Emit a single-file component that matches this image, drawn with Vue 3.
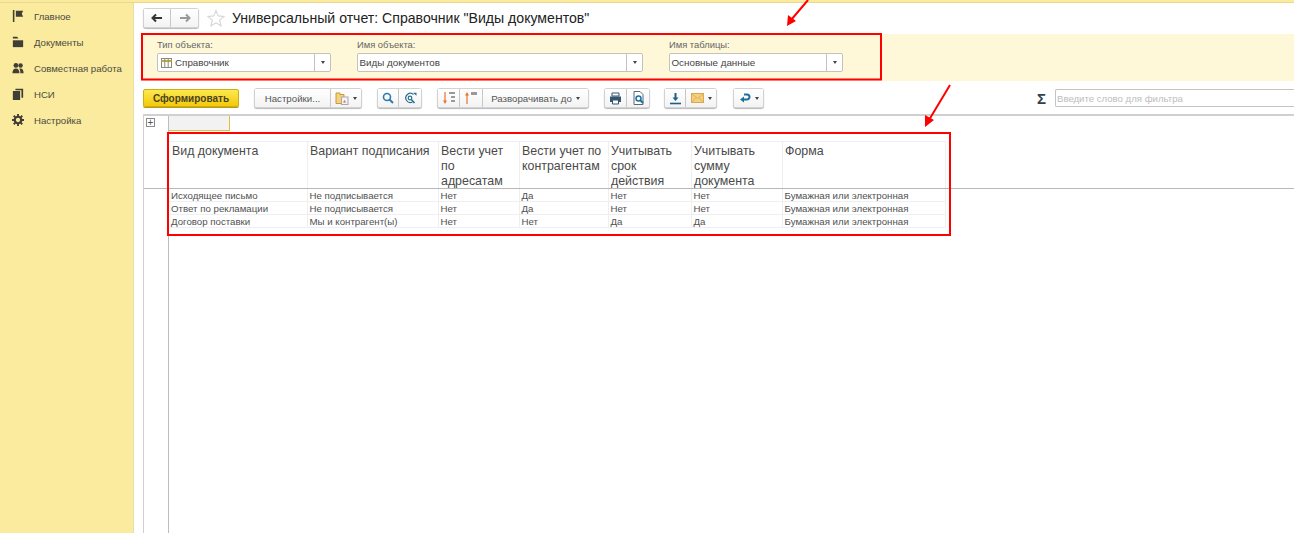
<script setup>
const menu = [
  { name: 'Главное', icon: 'flag' },
  { name: 'Документы', icon: 'folder' },
  { name: 'Совместная работа', icon: 'people' },
  { name: 'НСИ', icon: 'pages' },
  { name: 'Настройка', icon: 'gear' }
]

const params = [
  { label: 'Тип объекта:', value: 'Справочник', width: 174, gap: 26, table: true },
  { label: 'Имя объекта:', value: 'Виды документов', width: 286, gap: 26 },
  { label: 'Имя таблицы:', value: 'Основные данные', width: 174, gap: 0 }
]

const columns = [
  { title: 'Вид документа', width: 139 },
  { title: 'Вариант подписания', width: 131 },
  { title: 'Вести учет по адресатам', width: 81 },
  { title: 'Вести учет по контрагентам', width: 89 },
  { title: 'Учитывать срок действия', width: 83 },
  { title: 'Учитывать сумму документа', width: 91 },
  { title: 'Форма', width: 163 }
]

const rows = [
  ['Исходящее письмо', 'Не подписывается', 'Нет', 'Да', 'Нет', 'Нет', 'Бумажная или электронная'],
  ['Ответ по рекламации', 'Не подписывается', 'Нет', 'Да', 'Нет', 'Нет', 'Бумажная или электронная'],
  ['Договор поставки', 'Мы и контрагент(ы)', 'Нет', 'Нет', 'Да', 'Да', 'Бумажная или электронная']
]
</script>

<template>
  <div class="page">
    <div class="top-strip"></div>
    <div class="layout">
      <aside class="sidebar">
        <div v-for="item in menu" :key="item.name" class="menu-item">
          <svg class="menu-icon" width="12" height="12" viewBox="0 0 14 14">
            <g v-if="item.icon === 'flag'" fill="#3f3f35">
              <rect x="1" y="0" width="1.800" height="14" />
              <path d="M4.500 1h8.500l-1.600 3.500 1.600 3.500H4.500z" />
            </g>
            <g v-else-if="item.icon === 'folder'" fill="#3f3f35">
              <path d="M1 1h5l1.500 2H1z" />
              <path d="M1 5h12v8H1z" />
            </g>
            <g v-else-if="item.icon === 'people'" fill="#3f3f35">
              <circle cx="4.600" cy="4" r="2.800" />
              <circle cx="10" cy="4" r="2.600" />
              <path d="M0.500 13c0-3.500 1.500-5.400 4.100-5.400S8.700 9.500 8.700 13z" />
              <path d="M9.800 13c0-2.200-.4-3.900-1.300-5 .5-.2 1-.3 1.500-.3 2.300 0 3.500 2 3.500 5.300z" />
            </g>
            <g v-else-if="item.icon === 'pages'" fill="#3f3f35">
              <rect x="1" y="3.500" width="8.500" height="10.500" />
              <path d="M4 1h9v10.500h-2V2.500H4z" />
            </g>
            <g v-else>
              <circle cx="7" cy="7" r="3.800" fill="none" stroke="#3f3f35" stroke-width="2.600" />
              <path d="M7 0v3M7 11v3M0 7h3M11 7h3M2 2l2.200 2.200M9.800 9.800 12 12M12 2 9.800 4.200M4.200 9.800 2 12" stroke="#3f3f35" stroke-width="2.200" />
            </g>
          </svg>
          <span>{{ item.name }}</span>
        </div>
      </aside>

      <main class="content">
        <div class="title-row">
          <div class="btn-group nav-group">
            <button class="btn icon-btn nav-btn">
              <svg width="12" height="10" viewBox="0 0 12 10"><path d="M1 5h10M5 1.500 1.500 5 5 8.500" fill="none" stroke="#333" stroke-width="2" /></svg>
            </button>
            <button class="btn icon-btn nav-btn">
              <svg width="12" height="10" viewBox="0 0 12 10"><path d="M1 5h10M7 1.500 10.500 5 7 8.500" fill="none" stroke="#999" stroke-width="2" /></svg>
            </button>
          </div>
          <svg class="star" width="18" height="18" viewBox="0 0 19 18">
            <path d="M9.500 1.200 11.900 6.800 18 7.300 13.400 11.300 14.800 17.200 9.500 14.100 4.200 17.200 5.600 11.300 1 7.300 7.100 6.800z" fill="#fff" stroke="#d5d5d5" stroke-width="1.200" />
          </svg>
          <h1 class="title">Универсальный отчет: Справочник "Виды документов"</h1>
        </div>

        <div class="params">
          <div v-for="p in params" :key="p.label" class="param" :style="{ width: p.width + 'px', marginRight: p.gap + 'px' }">
            <label>{{ p.label }}</label>
            <div class="select">
              <svg v-if="p.table" class="select-icon" width="11" height="10" viewBox="0 0 11 10">
                <rect x="0.500" y="0.500" width="10" height="9" fill="#fff" stroke="#8a8a7a" />
                <path d="M0.500 3h10" stroke="#c9a93a" stroke-width="2" />
                <path d="M3.800 1v8M7.200 1v8" stroke="#8a8a7a" />
              </svg>
              <span class="select-text">{{ p.value }}</span>
              <span class="select-arrow"><i class="caret"></i></span>
            </div>
          </div>
        </div>

        <div class="toolbar">
          <button class="btn primary">Сформировать</button>

          <div class="btn-group settings-group">
            <button class="btn text-btn settings-btn">Настройки...</button>
            <button class="btn icon-btn settings-more">
              <svg width="14" height="14" viewBox="0 0 14 14">
                <path d="M1 2h4v1.500h4v9H1z" fill="#f3d27a" stroke="#c79a3c" />
                <rect x="6.500" y="6" width="6.500" height="7.500" fill="#f4f4f4" stroke="#a9a9a9" />
                <path d="M8 11.500 9.500 9l1.500 2.500z" fill="#d66" />
              </svg>
              <i class="caret"></i>
            </button>
          </div>

          <div class="btn-group search-group">
            <button class="btn icon-btn search-btn">
              <svg width="12" height="12" viewBox="0 0 12 12"><circle cx="5" cy="5" r="3.500" fill="none" stroke="#2b7bb0" stroke-width="1.600" /><path d="M7.500 7.500 11 11" stroke="#2b7bb0" stroke-width="2" /></svg>
            </button>
            <button class="btn icon-btn search-next">
              <svg width="13" height="13" viewBox="0 0 13 13"><path d="M9.500 2.500A4.600 4.600 0 1 0 8.500 10" fill="none" stroke="#2a6f90" stroke-width="1.200" /><circle cx="6" cy="6" r="1.800" fill="none" stroke="#2a6f90" stroke-width="1.200" /><path d="M7.300 7.500 10.500 11" stroke="#2a6f90" stroke-width="1.600" /><path d="M9 .8h3.500v3z" fill="#2a6f90" /></svg>
            </button>
          </div>

          <div class="btn-group expand-group">
            <button class="btn icon-btn w22">
              <svg width="14" height="14" viewBox="0 0 14 14"><path d="M3 1v10" stroke="#e8742a" stroke-width="1.200" /><path d="M1 9.500 3 13l2-3.500z" fill="#e8742a" /><path d="M7 1h6v2H7zM9 5h4v2H9zM9 9h4v2H9z" fill="#9a9a9a" /></svg>
            </button>
            <button class="btn icon-btn w23">
              <svg width="14" height="14" viewBox="0 0 14 14"><path d="M3 3v10" stroke="#e8742a" stroke-width="1.200" /><path d="M1 4.500 3 1l2 3.500z" fill="#e8742a" /><path d="M7 1h6v3H7z" fill="#9a9a9a" /></svg>
            </button>
            <button class="btn text-btn expand-btn">Разворачивать до <i class="caret"></i></button>
          </div>

          <div class="btn-group print-group">
            <button class="btn icon-btn w22">
              <svg width="13" height="13" viewBox="0 0 13 13"><path d="M3 1h7v3H3z" fill="#fff" stroke="#34566e" /><path d="M1 4.500h11V10H1z" fill="#34566e" /><path d="M3.500 8h6v4h-6z" fill="#fff" stroke="#34566e" /></svg>
            </button>
            <button class="btn icon-btn w22">
              <svg width="13" height="14" viewBox="0 0 13 14"><path d="M2 .5h6l3 3v10H2z" fill="#fff" stroke="#5a6a75" /><circle cx="6.500" cy="7.500" r="2.500" fill="none" stroke="#1f6f9c" stroke-width="1.500" /><path d="M8.300 9.300 11 12" stroke="#1f6f9c" stroke-width="2" /></svg>
            </button>
          </div>

          <div class="btn-group export-group">
            <button class="btn icon-btn w21">
              <svg width="13" height="13" viewBox="0 0 13 13"><path d="M6.500 1v6" stroke="#1c5f8a" stroke-width="2" /><path d="M3.500 5.500h6l-3 3.500z" fill="#1c5f8a" /><path d="M1 11.500h11" stroke="#1c5f8a" stroke-width="1.600" /></svg>
            </button>
            <button class="btn icon-btn w30">
              <svg width="13" height="10" viewBox="0 0 13 10"><rect x="0.500" y="0.500" width="12" height="9" fill="#f4cf80" stroke="#d9a94a" /><path d="M1 1l5.500 4.500L12 1M1 9l4-4.500M12 9 8 4.500" fill="none" stroke="#dba94c" stroke-width=".8" /></svg>
              <i class="caret"></i>
            </button>
          </div>

          <div class="btn-group undo-group">
            <button class="btn icon-btn undo-btn">
              <svg width="12" height="10" viewBox="0 0 12 10"><path d="M4 6.500h4A2.500 2.500 0 0 0 8 1.500H5" fill="none" stroke="#1f6f9c" stroke-width="2" /><path d="M5 3.500 1 6.500 5 9.500z" fill="#1f6f9c" /></svg>
              <i class="caret"></i>
            </button>
          </div>

          <div class="filter">
            <span class="sigma">Σ</span>
            <input class="filter-input" placeholder="Введите слово для фильтра" />
          </div>
        </div>

        <div class="sheet">
          <div class="sheet-row top-row">
            <div class="gutter"><span class="plus">+</span></div>
            <div class="active-cell"></div>
          </div>
          <div class="sheet-row spacer-row"><div class="gutter"></div></div>
          <div class="sheet-row head-row">
            <div class="gutter"></div>
            <div v-for="col in columns" :key="col.title" class="head-cell" :style="{ width: col.width + 'px' }">{{ col.title }}</div>
          </div>
          <div v-for="(row, i) in rows" :key="i" class="sheet-row body-row">
            <div class="gutter"></div>
            <div v-for="(val, j) in row" :key="j" class="body-cell" :style="{ width: columns[j].width + 'px' }">{{ val }}</div>
          </div>
          <div class="sheet-row rest-row"><div class="gutter"></div></div>
        </div>
      </main>
    </div>

    <!-- красные пометки поверх скриншота -->
    <svg class="marks" width="1294" height="533" viewBox="0 0 1294 533">
      <g fill="none" stroke="#f00" stroke-width="2">
        <rect x="142" y="34" width="739" height="45.500" />
        <rect x="168" y="133" width="782" height="102" />
        <path d="M808 0 791 20M950 85 929 120" />
      </g>
      <path d="M787 26 788 15 796 21z M925 127 925 115 934 120z" fill="#f00" />
    </svg>
  </div>
</template>

<style>
html, body {
  margin: 0;
  background: #fff;
}
</style>

<style scoped>
.page {
  position: relative;
  width: 1294px;
  height: 533px;
  overflow: hidden;
  font-family: "Liberation Sans", Arial, sans-serif;
  color: #444;
  display: flex;
  flex-direction: column;
}

.top-strip {
  height: 2px;
  background: #fbeb9e;
  border-bottom: 1px solid #e9d98c;
}

.layout {
  flex: 1;
  display: flex;
  min-height: 0;
}

.sidebar {
  width: 133px;
  background: #fbeb9e;
  border-right: 1px solid #e6dca6;
  flex-shrink: 0;
}

.menu-item {
  height: 26px;
  display: flex;
  align-items: center;
  padding-left: 12px;
  font-size: 9.600px;
  color: #4a4a40;
}

.menu-icon {
  margin-right: 10px;
  flex-shrink: 0;
}

.content {
  flex: 1;
  min-width: 0;
  display: flex;
  flex-direction: column;
}

.title-row {
  height: 31px;
  display: flex;
  align-items: center;
  padding-left: 10px;
  padding-bottom: 1px;
  box-sizing: border-box;
}

.star {
  margin-left: 9px;
  margin-right: 7px;
}

.title {
  margin: 0;
  font-size: 14.100px;
  font-weight: 400;
  color: #222;
  white-space: nowrap;
}

.params {
  height: 47px;
  background: #fef8d8;
  margin-left: 7px;
  padding-left: 16px;
  display: flex;
  box-sizing: border-box;
}

.param label {
  display: block;
  font-size: 9.400px;
  line-height: 12px;
  padding-top: 5px;
  height: 14px;
  color: #666;
}

.select {
  height: 19px;
  box-sizing: border-box;
  background: #fff;
  border: 1px solid #c4c4bc;
  border-radius: 2px;
  display: flex;
  align-items: center;
  padding-left: 1.500px;
  font-size: 9.800px;
  color: #444;
}

.select-icon {
  margin: 0 3px 0 1.500px;
}

.select-text {
  flex: 1;
}

.select-arrow {
  width: 15px;
  height: 100%;
  border-left: 1px solid #c4c4bc;
  display: flex;
  align-items: center;
  justify-content: center;
}

.caret {
  display: inline-block;
  width: 0;
  height: 0;
  border-left: 2.500px solid transparent;
  border-right: 2.500px solid transparent;
  border-top: 3px solid #444;
}

.toolbar {
  height: 35px;
  margin-left: 9px;
  display: flex;
  align-items: flex-start;
  padding-top: 8px;
  box-sizing: border-box;
  border-bottom: 2px solid #d0d0d0;
}

.btn {
  height: 18px;
  padding: 0;
  box-sizing: border-box;
  border: 0;
  border-right: 1px solid #c8c8c8;
  background: linear-gradient(#fff, #f3f3f3);
  display: flex;
  align-items: center;
  justify-content: center;
  gap: 4px;
  font-family: inherit;
  font-size: 9.700px;
  color: #555;
}

.btn:last-child {
  border-right: 0;
}

.btn-group {
  display: flex;
  height: 18px;
  border-radius: 2px;
  box-shadow: 0 0 0 1px #d2d2d2, 0 1px 1px 1px #b8b8b8;
  background: #fff;
}

.primary {
  width: 96px;
  height: 18px;
  border: 1px solid #d0ae10;
  border-radius: 2px;
  background: linear-gradient(#fce94f, #f3c90c);
  font-size: 10px;
  font-weight: 700;
  color: #4a4320;
  box-shadow: 0 1px 0 #b89a10;
  flex-shrink: 0;
}

.nav-group {
  flex-shrink: 0;
}

.nav-btn {
  width: 27px;
}

.settings-group {
  margin-left: 16px;
}

.settings-btn {
  width: 76px;
}

.settings-more {
  width: 30px;
}

.search-group,
.expand-group,
.print-group {
  margin-left: 17px;
}

.search-btn {
  width: 21px;
}

.search-next {
  width: 22px;
}

.expand-btn {
  width: 105px;
}

.export-group {
  margin-left: 16px;
}

.undo-group {
  margin-left: 18px;
}

.undo-btn {
  width: 29px;
}

.w21 {
  width: 21px;
}

.w22 {
  width: 22px;
}

.w23 {
  width: 23px;
}

.w30 {
  width: 30px;
}

.filter {
  margin-left: auto;
  display: flex;
  align-items: center;
  height: 18px;
}

.sigma {
  font-size: 15px;
  font-weight: 700;
  color: #34404a;
  margin-right: 9px;
}

.filter-input {
  width: 239px;
  height: 18px;
  box-sizing: border-box;
  border: 1px solid #c4c4c4;
  border-right: 0;
  border-radius: 2px 0 0 2px;
  padding: 0 1px;
  font-family: inherit;
  font-size: 9.600px;
  outline: none;
}

.filter-input::placeholder {
  color: #bdbdbd;
}

.sheet {
  flex: 1;
  margin-left: 9px;
  border-left: 1px solid #d0d0d0;
  display: flex;
  flex-direction: column;
  min-height: 0;
}

.sheet-row {
  display: flex;
}

.gutter {
  width: 24px;
  flex-shrink: 0;
  border-right: 1px solid #bdbdbd;
}

.top-row {
  height: 15px;
}

.plus {
  display: block;
  width: 7px;
  height: 7px;
  margin: 2px 0 0 2px;
  border: 1px solid #8a8a8a;
  font-size: 10px;
  line-height: 7px;
  text-align: center;
  color: #555;
}

.active-cell {
  width: 61px;
  box-sizing: border-box;
  background: #f2f2f2;
  border-right: 1px solid #e8bd3c;
  border-bottom: 1px solid #e8bd3c;
}

.spacer-row {
  height: 10px;
}

.head-row {
  height: 48px;
  box-sizing: border-box;
  border-bottom: 1px solid #b8b8b8;
}

.head-cell {
  box-sizing: border-box;
  flex-shrink: 0;
  border-top: 1px solid #efefef;
  border-right: 1px solid #efefef;
  padding: 2px 0 0 2px;
  font-size: 12.400px;
  line-height: 15px;
  color: #4a4a4a;
}

.head-cell:nth-child(2) {
  padding-left: 3px;
}

.body-row {
  height: 13px;
}

.body-cell {
  box-sizing: border-box;
  flex-shrink: 0;
  border-right: 1px solid #efefef;
  border-bottom: 1px solid #efefef;
  padding-left: 1.500px;
  font-size: 9.700px;
  line-height: 13px;
  color: #505050;
  white-space: nowrap;
}

.body-cell:nth-child(2) {
  padding-left: 2px;
}

.rest-row {
  flex: 1;
}

.marks {
  position: absolute;
  left: 0;
  top: 0;
  pointer-events: none;
}
</style>
